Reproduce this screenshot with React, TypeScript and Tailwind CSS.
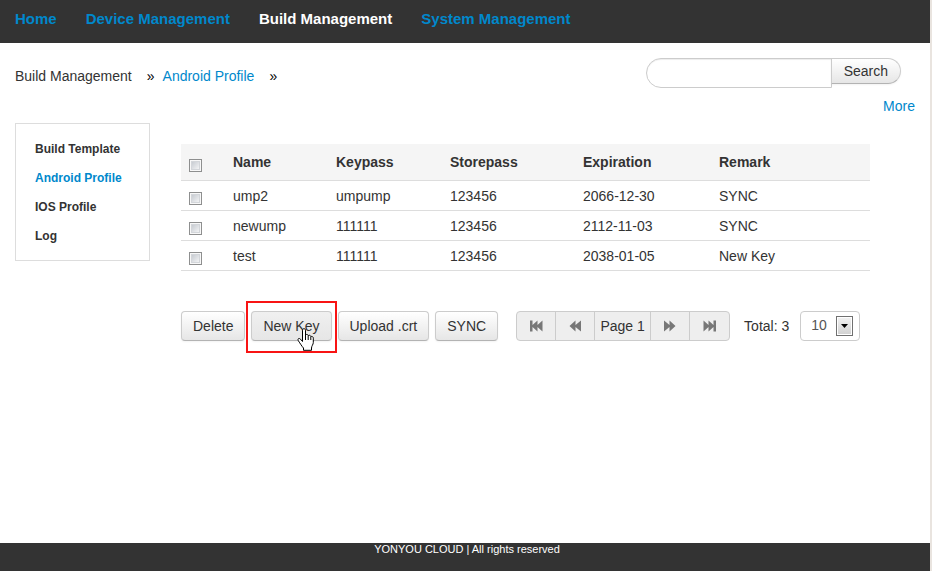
import type { ReactNode } from "react";

const NAV = ["Home", "Device Management", "Build Management", "System Management"];
const SIDE = ["Build Template", "Android Profile", "IOS Profile", "Log"];
const ROWS = [
  { name: "ump2", keypass: "umpump", storepass: "123456", expiration: "2066-12-30", remark: "SYNC" },
  { name: "newump", keypass: "111111", storepass: "123456", expiration: "2112-11-03", remark: "SYNC" },
  { name: "test", keypass: "111111", storepass: "123456", expiration: "2038-01-05", remark: "New Key" },
];

function Check({ label }: { label: string }) {
  return (
    <input
      type="checkbox"
      aria-label={label}
      className="block size-[13px] appearance-none border border-[#8e8f8f] bg-linear-to-br from-[#bcc1c8] to-white shadow-[inset_0_0_0_1px_#f8f8f8,inset_0_0_0_2px_#d3d6da]"
    />
  );
}

function Btn({ children, hover = false }: { children: ReactNode; hover?: boolean }) {
  return (
    <button
      type="button"
      className={
        "h-[30px] rounded border border-[#ccc] border-b-[#b3b3b3] px-[11px] leading-5 whitespace-nowrap shadow-[0_1px_2px_rgba(0,0,0,0.05)] " +
        (hover ? "bg-linear-to-b from-[#f0f0f0] to-[#e6e6e6]" : "bg-linear-to-b from-white to-[#e6e6e6]")
      }
    >
      {children}
    </button>
  );
}

function PageIcon({ end = false, flip = false }: { end?: boolean; flip?: boolean }) {
  return (
    <svg
      width="14"
      height="12"
      viewBox="0 0 14 12"
      fill="#777"
      className={flip ? "-scale-x-100" : ""}
      aria-hidden="true"
    >
      {end ? (
        <path d="M0.5 0.5 L5.5 5 V0.5 L10.5 5 V0.5 H13 V11.5 H10.5 V7 L5.5 11.5 V7 L0.5 11.5 Z" />
      ) : (
        <path d="M1 0.5 L6.5 5 V0.5 L12.5 6 L6.5 11.5 V7 L1 11.5 Z" />
      )}
    </svg>
  );
}

function PageBtn({ label, children }: { label: string; children: ReactNode }) {
  return (
    <button type="button" aria-label={label} className="flex w-[39px] items-center justify-center">
      {children}
    </button>
  );
}

function HandCursor() {
  return (
    <svg width="17" height="23" viewBox="0 0 17 23" aria-hidden="true">
      <path
        d="M5.5 13.5V2.2C5.5 .2 8.5 .2 8.5 2.2V7C9.5 6 11 6.4 11.2 7.6C12.3 6.8 13.6 7.3 13.8 8.6C15 8 16.3 8.8 16.3 10.2V14.5C16.3 16.5 14.5 18 14.5 20V22.3H6.5V20C5 18.5 3.2 15.5 1.4 12.8C.2 10.8 2 9.6 3.5 11.2Z"
        fill="#fff"
        stroke="#000"
      />
      <path d="M8.5 7V12M11.2 8V12M13.8 9V12" stroke="#000" fill="none" />
    </svg>
  );
}

export default function App() {
  return (
    <div className="min-h-screen bg-[#e9e4df] pr-0.5 font-['Liberation_Sans',Arial,sans-serif] text-sm leading-5 text-[#333]">
      <div className="flex min-h-screen flex-col bg-white">
        <nav className="flex h-[43px] items-start gap-[29px] bg-[#333] px-[15px] pt-[9px] text-[15px] leading-5 font-bold">
          {NAV.map((item) => (
            <a key={item} href="#" className={item === "Build Management" ? "text-white" : "text-[#0088cc]"}>
              {item}
            </a>
          ))}
        </nav>

        <header className="flex justify-between pt-[15px] pr-[29px] pl-[15px]">
          <div className="flex pt-2">
            <span>Build Management</span>
            <span className="pr-2 pl-[15px] text-black">»</span>
            <a href="#" className="text-[#0088cc]">Android Profile</a>
            <span className="pl-[15px] text-black">»</span>
          </div>
          <form className="flex items-start">
            <input
              type="text"
              aria-label="Search"
              className="h-[30px] w-[186px] rounded-l-full border border-[#ccc] bg-white px-3.5 shadow-[inset_0_1px_1px_rgba(0,0,0,0.075)] outline-none"
            />
            <button
              type="button"
              className="-ml-px h-[26px] rounded-r-full border border-[#ccc] border-b-[#b3b3b3] bg-linear-to-b from-white to-[#e6e6e6] px-3 shadow-[0_1px_2px_rgba(0,0,0,0.05)]"
            >
              Search
            </button>
          </form>
        </header>

        <div className="flex justify-end pt-2 pr-[15px]">
          <a href="#" className="text-[#0088cc]">More</a>
        </div>

        <div className="flex grow items-start gap-[31px] pt-[7px] pr-[60px] pl-[15px]">
          <aside className="flex w-[135px] shrink-0 flex-col gap-[9px] border border-[#ddd] px-[19px] pt-[15px] pb-3.5 text-xs leading-5 font-bold">
            {SIDE.map((item) => (
              <a key={item} href="#" className={item === "Android Profile" ? "text-[#0088cc]" : ""}>
                {item}
              </a>
            ))}
          </aside>

          <main className="grow pt-[21px]">
            <table className="w-full table-fixed border-collapse text-left">
              <colgroup>
                <col className="w-[44px]" />
                <col className="w-[103px]" />
                <col className="w-[114px]" />
                <col className="w-[133px]" />
                <col className="w-[136px]" />
                <col />
              </colgroup>
              <thead>
                <tr className="h-9 border-b border-[#ddd] bg-[#f5f5f5]">
                  <th className="px-2 pt-2"><Check label="Select all" /></th>
                  <th className="px-2">Name</th>
                  <th className="px-2">Keypass</th>
                  <th className="px-2">Storepass</th>
                  <th className="px-2">Expiration</th>
                  <th className="px-2">Remark</th>
                </tr>
              </thead>
              <tbody>
                {ROWS.map((row) => (
                  <tr key={row.name} className="h-[30px] border-b border-[#ddd]">
                    <td className="px-2 pt-1.5"><Check label={"Select " + row.name} /></td>
                    <td className="px-2 pt-0.5">{row.name}</td>
                    <td className="px-2 pt-0.5">{row.keypass}</td>
                    <td className="px-2 pt-0.5">{row.storepass}</td>
                    <td className="px-2 pt-0.5">{row.expiration}</td>
                    <td className="px-2 pt-0.5">{row.remark}</td>
                  </tr>
                ))}
              </tbody>
            </table>

            <div className="mt-10 flex items-center">
              <div className="flex gap-1.5">
                <Btn>Delete</Btn>
                <div className="relative">
                  <Btn hover>New Key</Btn>
                  <div className="pointer-events-none absolute -inset-x-[5px] -top-[10px] -bottom-[12px] z-10 border-2 border-[#f81414]" />
                  <div className="pointer-events-none absolute top-[17px] left-[46px] z-20"><HandCursor /></div>
                </div>
                <Btn>Upload .crt</Btn>
                <Btn>SYNC</Btn>
              </div>

              <div className="ml-[18px] flex h-[30px] divide-x divide-[#ccc] rounded border border-[#ccc] bg-[#eee]">
                <PageBtn label="First page"><PageIcon end flip /></PageBtn>
                <PageBtn label="Previous page"><PageIcon flip /></PageBtn>
                <span className="w-14 pt-1 text-center whitespace-nowrap">Page 1</span>
                <PageBtn label="Next page"><PageIcon /></PageBtn>
                <PageBtn label="Last page"><PageIcon end /></PageBtn>
              </div>

              <label htmlFor="page-size" className="ml-3.5 whitespace-nowrap">Total: 3</label>
              <div className="relative ml-[11px]">
                <select
                  id="page-size"
                  className="block h-[30px] w-[60px] appearance-none rounded border border-[#ccc] bg-white pb-0.5 pl-2.5 text-[#555]"
                >
                  <option>10</option>
                  <option>20</option>
                </select>
                <span className="pointer-events-none absolute top-[5px] right-[7px] flex h-5 w-[17px] items-center justify-center border border-[#707070] bg-linear-to-b from-[#f2f2f2] to-[#d0d0d0] shadow-[inset_0_0_0_1px_#fff]">
                  <svg width="7" height="4" viewBox="0 0 7 4" aria-hidden="true">
                    <path d="M0 0H7L3.5 4Z" fill="#000" />
                  </svg>
                </span>
              </div>
            </div>
          </main>
        </div>

        <footer className="h-7 bg-[#333] pl-1 text-center text-[11px] leading-[13px] text-white">
          YONYOU CLOUD | All rights reserved
        </footer>
      </div>
    </div>
  );
}
